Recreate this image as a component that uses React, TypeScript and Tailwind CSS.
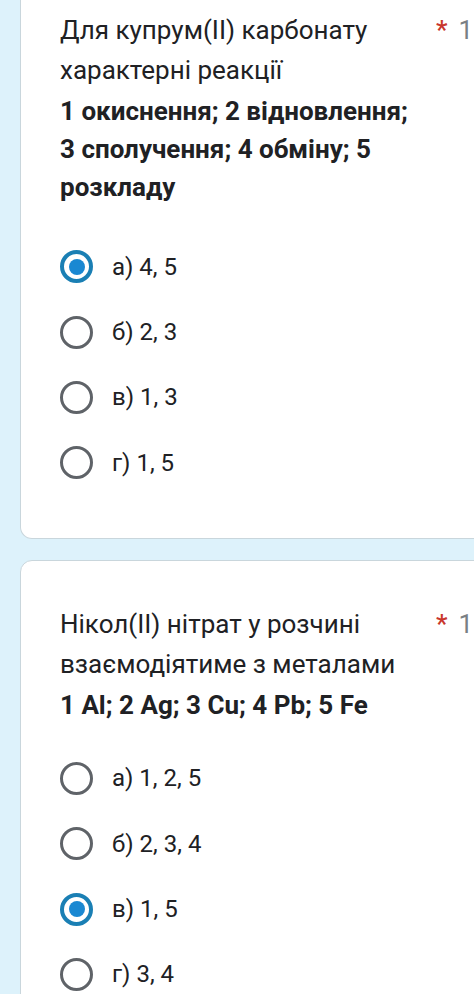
import React from "react"

interface Question {
  lines: string[]
  bold: string[]
  options: string[]
  selected: number
}

const questions: Question[] = [
  {
    lines: ["Для купрум(II) карбонату", "характерні реакції"],
    bold: ["1 окиснення; 2 відновлення;", "3 сполучення; 4 обміну; 5", "розкладу"],
    options: ["а) 4, 5", "б) 2, 3", "в) 1, 3", "г) 1, 5"],
    selected: 0,
  },
  {
    lines: ["Нікол(II) нітрат у розчині", "взаємодіятиме з металами"],
    bold: ["1 Al; 2 Ag; 3 Cu; 4 Pb; 5 Fe"],
    options: ["а) 1, 2, 5", "б) 2, 3, 4", "в) 1, 5", "г) 3, 4"],
    selected: 2,
  },
]

function Radio({ checked }: { checked: boolean }) {
  if (checked) {
    return (
      <div className="w-[33px] h-[33px] rounded-full border-[4px] border-[#1a7fb4] flex items-center justify-center flex-shrink-0">
        <div className="w-[16px] h-[16px] rounded-full bg-[#1a88d2]" />
      </div>
    )
  }
  return <div className="w-[33px] h-[33px] rounded-full border-[3px] border-[#5f6368] flex-shrink-0" />
}

function Card({ q, first }: { q: Question; first: boolean }) {
  return (
    <div
      className={
        first
          ? "bg-white border-x border-b border-[#c9d6dc] rounded-b-[12px] pt-[10px] pb-[42px] pl-[39px]"
          : "bg-white border border-[#c9d6dc] rounded-[12px] pt-[43px] pb-[40px] pl-[39px]"
      }
    >
      <div className="flex">
        <div className="w-[368px] flex-shrink-0">
          {q.lines.map((l) => (
            <div key={l} className="text-[26px] leading-[40px] text-[#202124]">
              {l}
            </div>
          ))}
          <div className="mt-[2px]">
            {q.bold.map((l) => (
              <div key={l} className="text-[26px] leading-[38px] font-bold text-[#202124]">
                {l}
              </div>
            ))}
          </div>
        </div>
        <div className="flex-shrink-0 whitespace-nowrap text-[26px] leading-[40px] pl-[8px]">
          <span className="text-[#c9372c] font-medium">*</span>
          <span className="text-[#7a7f84] ml-[11px]">1 бал</span>
        </div>
      </div>
      <div className={first ? "mt-[28px]" : "mt-[22px]"}>
        {q.options.map((o, i) => (
          <div key={o} className="h-[65.4px] flex items-center gap-[19px]">
            <Radio checked={i === q.selected} />
            <span className="text-[24px] text-[#202124]">{o}</span>
          </div>
        ))}
      </div>
    </div>
  )
}

export default function App() {
  return (
    <div
      className="w-[474px] h-[994px] overflow-hidden bg-[#ddf2fb] pl-[20px]"
      style={{ fontFamily: "Roboto, 'Noto Sans', sans-serif" }}
    >
      <div className="w-[520px] flex flex-col gap-[21px]">
        {questions.map((q, i) => (
          <Card key={i} q={q} first={i === 0} />
        ))}
      </div>
    </div>
  )
}
